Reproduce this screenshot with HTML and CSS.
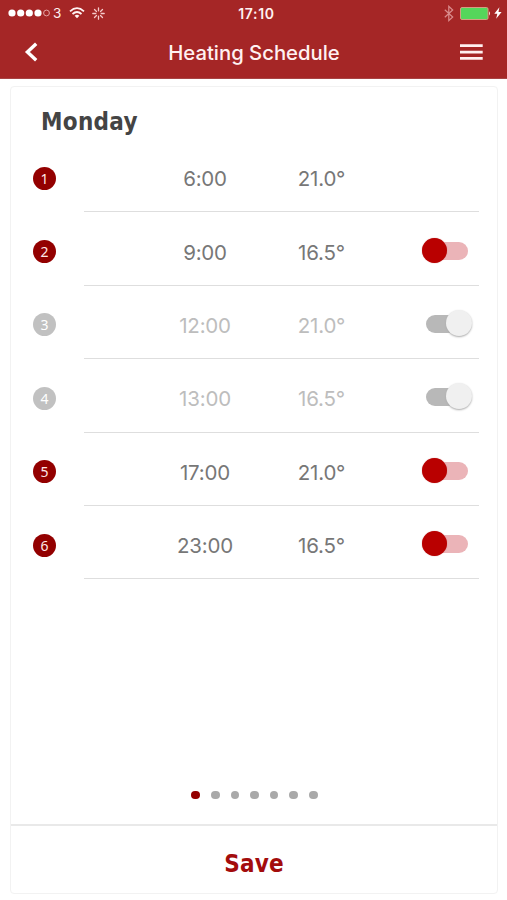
FILE: index.html
```html
<!DOCTYPE html>
<html lang="en">
<head>
<meta charset="utf-8">
<title>Heating Schedule</title>
<link rel="stylesheet" href="styles.css">
</head>
<body>
<header class="header">
  <div class="status">
    <div class="status-left">
      <svg width="43" height="10" viewBox="0 0 43 10"><g fill="#fff"><circle cx="4" cy="5" r="3.6"/><circle cx="12.7" cy="5" r="3.6"/><circle cx="21.3" cy="5" r="3.6"/><circle cx="30" cy="5" r="3.6"/></g><circle cx="38.5" cy="5" r="2.9" fill="none" stroke="#e4a5a5"/></svg>
      <span class="carrier">3</span>
      <svg class="wifi" width="16" height="12" viewBox="0 0 16 12" fill="none" stroke="#fff4f4" stroke-width="1.8"><path d="M1 4.3Q8-2 15 4.3M3.5 7Q8 3 12.5 7"/><path d="M5.6 8.7Q8 6.9 10.4 8.7L8 11.2Z" fill="#fff4f4" stroke="none"/></svg>
      <svg class="spinner" width="13" height="13" viewBox="0 0 13 13" stroke="#f5caca" stroke-width="1.3" stroke-linecap="round"><path d="M6.5.8v3M6.5 9.2v3M.8 6.5h3M9.2 6.5h3M2.5 2.5l2 2M8.5 8.5l2 2M10.5 2.5l-2 2M4.5 8.5l-2 2"/></svg>
    </div>
    <span class="clock">17:10</span>
    <div class="status-right">
      <svg width="10" height="17" viewBox="0 0 10 17" fill="none" stroke="#da8c8c" stroke-width="1.2"><path d="M.8 4.7 8.7 12 4.8 15.6V1.3L8.7 5 .8 12.2"/></svg>
      <svg width="31" height="13" viewBox="0 0 31 13"><rect x=".5" y=".5" width="27.5" height="12" rx="1.5" fill="#55d65b" stroke="#d69d83"/><path d="M29 4.3q2 2.2 0 4.4z" fill="#ffdcdc"/></svg>
      <svg class="bolt" width="8" height="12" viewBox="0 0 8 12"><path d="M5.4.2.3 6.7h3L2.2 11.8 7.6 5H4.5z" fill="#fff"/></svg>
    </div>
  </div>
  <nav class="nav">
    <svg width="14" height="20" viewBox="0 0 14 20" fill="none" stroke="#fff" stroke-width="3.4"><path d="M12.2 1.7 3.4 10l8.8 8.3"/></svg>
    <h1 class="title">Heating Schedule</h1>
    <svg width="23" height="17" viewBox="0 0 23 17" fill="#fff1f1"><path d="M0 .2h22.7v2.8H0zM0 6.7h22.7v2.8H0zM0 13h22.7v2.8H0z"/></svg>
  </nav>
</header>
<main class="card">
  <h2 class="day">Monday</h2>
  <div class="schedule">
    <div class="row"><span class="badge">1</span><div class="entry"><span class="time">6:00</span><span class="temp">21.0°</span></div></div>
    <div class="row"><span class="badge">2</span><div class="entry"><span class="time">9:00</span><span class="temp">16.5°</span><span class="switch"></span></div></div>
    <div class="row off"><span class="badge">3</span><div class="entry"><span class="time">12:00</span><span class="temp">21.0°</span><span class="switch"></span></div></div>
    <div class="row off"><span class="badge">4</span><div class="entry"><span class="time">13:00</span><span class="temp">16.5°</span><span class="switch"></span></div></div>
    <div class="row"><span class="badge">5</span><div class="entry"><span class="time">17:00</span><span class="temp">21.0°</span><span class="switch"></span></div></div>
    <div class="row"><span class="badge">6</span><div class="entry"><span class="time">23:00</span><span class="temp">16.5°</span><span class="switch"></span></div></div>
  </div>
  <div class="pager"><i class="current"></i><i></i><i></i><i></i><i></i><i></i><i></i></div>
  <button class="save">Save</button>
</main>
</body>
</html>
```
FILE: styles.css
```css
* { box-sizing: border-box; }
body {
  margin: 0;
  height: 900px;
  display: flex;
  flex-direction: column;
  background: #fff;
  font-family: Inter, "Liberation Sans", sans-serif;
  overflow: hidden;
}
svg { display: block; flex: none; }
.header {
  height: 79px;
  flex: none;
  background: #a52626;
  border-bottom: 1px solid #a84444;
  color: #fff1f1;
}
.status {
  height: 26px;
  display: grid;
  grid-template-columns: 1fr auto 1fr;
  align-items: center;
  padding: 0 5px 0 8px;
}
.status-left, .status-right { display: flex; align-items: center; }
.status-right { justify-content: flex-end; gap: 6px; }
.bolt { margin-left: -3px; }
.carrier { font-size: 13.5px; margin-left: 2px; line-height: 26px; }
.wifi { margin-left: 8px; }
.spinner { margin-left: 7px; }
.clock { font-size: 14px; font-weight: 600; letter-spacing: .7px; padding-left: 3px; }
.nav {
  height: 52px;
  display: flex;
  align-items: center;
  justify-content: space-between;
  padding: 0 24px;
}
.title { margin: 0 0 0 10px; font-size: 20.3px; font-weight: 500; letter-spacing: 0; }
.card {
  width: 488px;
  height: 808px;
  margin: 7px 0 0 10px;
  border: 1px solid #f2f2f2;
  border-radius: 4px;
  display: flex;
  flex-direction: column;
}
.day {
  margin: 0;
  height: 52px;
  padding: 19.5px 0 0 30px;
  color: #444;
  font: bold 24px/30px "DejaVu Sans Condensed", "DejaVu Sans", sans-serif;
  font-stretch: condensed;
  letter-spacing: .3px;
}
.schedule { padding: 0 18px 0 22px; }
.row { height: 73.4px; display: flex; align-items: center; }
.badge {
  width: 23px;
  height: 23px;
  margin: 5px 28px 0 0;
  border-radius: 50%;
  background: #930000;
  color: #ffe8e8;
  font: 14px/24px "Noto Sans", sans-serif;
  text-align: center;
}
.entry {
  flex: 1;
  height: 100%;
  padding-top: 7px;
  border-bottom: 1px solid #dedede;
  display: grid;
  grid-template-columns: 62px 118px 115px 1fr;
  align-items: center;
  color: #777;
  font-size: 20.5px;
}
.time { grid-column: 2; text-align: center; }
.temp { text-align: center; }
.time, .temp { letter-spacing: -.2px; }
.switch {
  position: relative;
  width: 40px;
  height: 18px;
  margin: -3px 0 0 49px;
  border-radius: 9px;
  background: #ebb4b8;
}
.switch::before {
  content: "";
  position: absolute;
  left: -6px;
  top: -4px;
  width: 25px;
  height: 25px;
  border-radius: 50%;
  background: #b90000;
  box-shadow: 0 0 1px #c96a6a;
}
.off .entry { color: #bdbdbd; }
.off .badge { background: #c1c1c1; color: #fff; }
.off .switch { background: #b8b8b8; width: 42px; margin-left: 47px; }
.off .switch::before { left: 20px; top: -5px; width: 26px; height: 26px; background: #f0f0f0; box-shadow: 0 1px 2px #aaa; }
.pager {
  margin-top: auto;
  height: 58px;
  display: flex;
  justify-content: center;
  align-items: center;
  gap: 11.1px;
  padding-left: 1px;
}
.pager i { width: 8.5px; height: 8.5px; border-radius: 50%; background: #a9a9a9; }
.pager .current { background: #940000; }
.save {
  height: 69px;
  padding: 9px 0 0;
  border: 0;
  border-top: 2px solid #e9e9e9;
  background: none;
  color: #a30c0c;
  font: bold 24px/30px "DejaVu Sans Condensed", "DejaVu Sans", sans-serif;
  font-stretch: condensed;
  letter-spacing: .2px;
}
```
